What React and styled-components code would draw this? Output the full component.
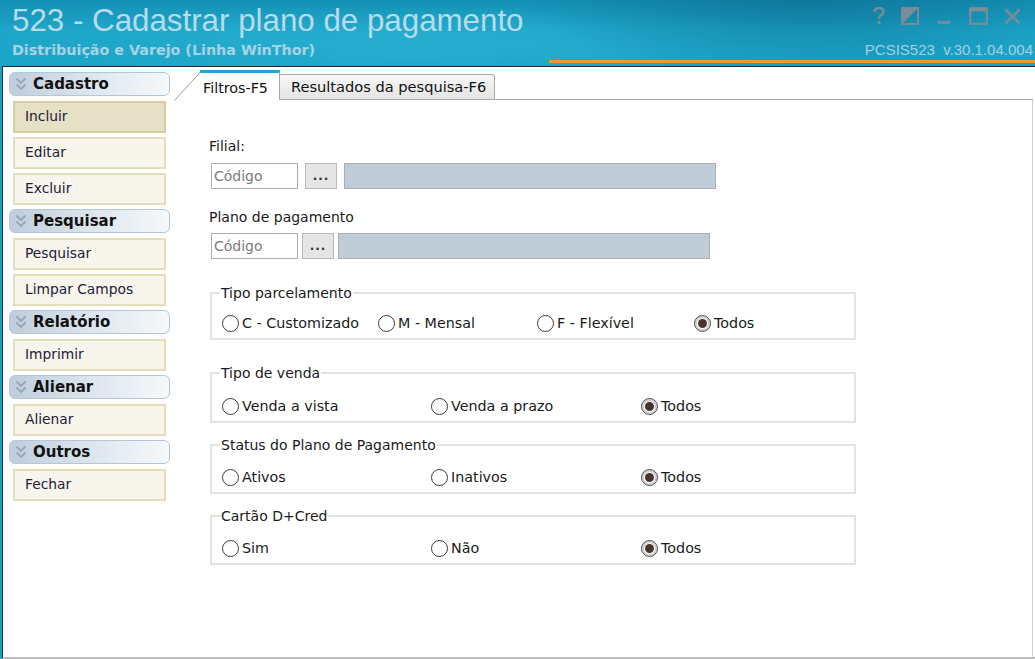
import React from 'react';
import styled, { createGlobalStyle } from 'styled-components';

const Global = createGlobalStyle`
  html, body { margin: 0; padding: 0; }
  body {
    width: 1035px; height: 659px; overflow: hidden;
    font-family: "DejaVu Sans", "Liberation Sans", sans-serif;
    color: #1a1a1a;
  }
  #root { height: 100%; }
`;

const Window = styled.div`
  width: 1035px; height: 659px;
  display: flex; flex-direction: column;
  background: #1aa0c2;
`;

const TitleBar = styled.header`
  height: 66px; flex: none; box-sizing: border-box;
  display: flex; flex-direction: column;
  background:
    radial-gradient(ellipse 420px 120px at 78% -10%, rgba(8, 96, 132, 0.55), rgba(8, 96, 132, 0) 70%),
    radial-gradient(ellipse 700px 60px at 40% 70%, rgba(60, 190, 220, 0.35), rgba(60, 190, 220, 0) 70%),
    linear-gradient(180deg, #1590b5 0%, #1ca5c8 45%, #1aa3c6 100%);
`;

const TitleRow = styled.div`
  height: 40px; display: flex; justify-content: space-between; align-items: flex-start;
`;

const Title = styled.h1`
  margin: 0; padding: 3px 0 0 12px;
  font: 400 31.3px/36px "Liberation Sans", Arial, sans-serif;
  color: #b6dcec; letter-spacing: 0;
`;

const WinButtons = styled.div`
  display: flex; align-items: center; gap: 0; margin: 7px 6px 0 0;
`;

const WinBtn = styled.span`
  width: ${p => p.w || 34}px; height: 18px;
  display: inline-flex; align-items: center; justify-content: center;
`;

const SubRow = styled.div`
  height: 20px; display: flex; justify-content: space-between; align-items: center;
`;

const Subtitle = styled.div`
  padding-left: 12px;
  font: 700 14.3px/20px "DejaVu Sans", sans-serif;
  color: #a6d3e5;
`;

const Version = styled.div`
  padding-right: 2px;
  font: 400 15px/20px "Liberation Sans", Arial, sans-serif;
  color: #a3d0e1; white-space: pre;
`;

const Accent = styled.div`
  height: 3px; margin: 0 0 0 549px; background: #f0982a;
`;

const Body = styled.div`
  flex: 1; display: flex; min-height: 0;
  margin: 0 0 0 2px;
  background: #ffffff;
  border-left: 1px solid #26343a;
  border-top: 1px solid #1f2a2e;
  border-bottom: 2px solid #bdbdbd;
`;

const Sidebar = styled.nav`
  width: 161px; flex: none;
  padding: 5px 0 0 6px;
  display: flex; flex-direction: column; gap: 4px;
`;

const SectionHeader = styled.div`
  height: 24px; box-sizing: border-box;
  margin-bottom: 1px;
  display: flex; align-items: center; gap: 6px;
  padding-left: 5px;
  border: 1px solid #b7c6d5; border-radius: 6px;
  background: linear-gradient(90deg, #bfcddc 0%, #d9e3ec 45%, #f6f9fb 100%);
  font: 700 15px/1 "DejaVu Sans", sans-serif; color: #111;
`;

const NavItem = styled.div`
  height: 32px; box-sizing: border-box;
  margin-left: 4px; width: 153px;
  display: flex; align-items: center; padding-left: 10px;
  border: 2px solid ${p => (p.active ? '#d8cc9e' : '#e6deba')};
  background: ${p => (p.active ? '#e6e0c7' : '#f7f5ec')};
  font: 400 13.8px/1 "DejaVu Sans", sans-serif; color: #1f2038;
`;

const Main = styled.main`
  flex: 1; display: flex; flex-direction: column;
  margin: 3px 2px 0 4px;
`;

const TabStrip = styled.div`
  height: 30px; display: flex; align-items: flex-end; flex: none;
`;

const TabLead = styled.div`
  width: 26px; height: 30px; flex: none;
`;

const ActiveTab = styled.div`
  position: relative;
  width: 80px; height: 30px; box-sizing: border-box;
  display: flex; align-items: center; padding: 3px 0 0 3px;
  border-top: 3px solid #2a9fd6;
  border-right: 1px solid #a8a8a8;
  background: #fff;
  font: 400 14.3px/1 "DejaVu Sans", sans-serif; color: #111;
`;

const TabSlant = styled.svg`
  position: absolute; left: -26px; top: -3px;
`;

const Tab = styled.div`
  height: 26px; box-sizing: border-box;
  display: flex; align-items: center; padding: 0 8px 0 11px;
  border: 1px solid #a9a9a9; border-left: none; border-radius: 0 3px 0 0;
  background: linear-gradient(180deg, #f7f7f7 0%, #e4e4e4 100%);
  font: 400 14.6px/1 "DejaVu Sans", sans-serif; color: #111;
`;

const TabFill = styled.div`
  flex: 1; height: 30px; box-sizing: border-box; border-bottom: 1px solid #a9a9a9;
`;

const Panel = styled.section`
  flex: 1; box-sizing: border-box;
  border-right: 1px solid #d2d2d2;
  padding: 37px 0 0 35px;
  display: flex; flex-direction: column; align-items: flex-start;
`;

const FieldLabel = styled.label`
  font: 400 14px/18px "DejaVu Sans", sans-serif; color: #1a1a1a;
  margin: ${p => p.top || 0}px 0 ${p => p.bottom || 7}px 0;
`;

const LookupRow = styled.div`
  display: flex; gap: ${p => p.gap}px; margin-left: 2px; height: 26px;
`;

const CodeInput = styled.div`
  width: 87px; height: 26px; box-sizing: border-box;
  border: 1px solid #adadad; background: #fff;
  display: flex; align-items: center; padding-left: 2px;
  font: 400 14px/1 "DejaVu Sans", sans-serif; color: #7b7b7b;
`;

const DotsButton = styled.div`
  width: 32px; height: 26px; box-sizing: border-box;
  border: 1px solid #b9b9b9; background: #e5e5e5;
  display: flex; align-items: flex-end; justify-content: center; padding-bottom: 6px;
  font: 700 12px/1 "DejaVu Sans", sans-serif; color: #333; letter-spacing: 1px;
`;

const DescField = styled.div`
  width: ${p => p.w}px; height: 26px; box-sizing: border-box;
  border: 1px solid #a9b0b6; background: #c0cdd9;
`;

const GroupBox = styled.fieldset`
  width: 646px; box-sizing: border-box;
  margin: ${p => p.top}px 0 0 1px; padding: 0 10px 6px;
  border: 2px solid #e2e2e2;
  min-inline-size: auto;
`;

const Legend = styled.legend`
  padding: 0 1px; margin-left: -2px;
  font: 400 14px/18px "DejaVu Sans", sans-serif; color: #1a1a1a;
`;

const RadioRow = styled.div`
  display: grid; grid-template-columns: ${p => p.cols};
  margin-top: ${p => p.top}px; height: 18px; align-items: center;
`;

const RadioOption = styled.div`
  display: flex; align-items: center; gap: 3px;
  font: 400 14.3px/18px "DejaVu Sans", sans-serif; color: #1a1a1a; white-space: nowrap;
`;

const RadioCircle = styled.span`
  width: 17px; height: 17px; box-sizing: border-box; flex: none;
  border-radius: 50%;
  border: 1px solid ${p => (p.checked ? '#4a4a4a' : '#3b3b3b')};
  background: #fff;
  box-shadow: ${p => (p.checked ? 'inset 0 0 0 2px #cfcfcf' : 'none')};
  display: inline-flex; align-items: center; justify-content: center;
`;

const RadioDot = styled.span`
  width: 9px; height: 9px; border-radius: 50%; background: #47342c;
`;

const Chevrons = () => (
  <svg width="12" height="14" viewBox="0 0 12 14">
    <path d="M1.5 1.5 L6 6 L10.5 1.5 M1.5 7.5 L6 12 L10.5 7.5" fill="none" stroke="#95a6b6" strokeWidth="1.8" />
  </svg>
);

const IconColor = '#7c8c97';

const HelpIcon = () => (
  <svg width="14" height="18" viewBox="0 0 14 18">
    <path d="M2.5 5 C2.5 2 4.5 1 7 1 C9.8 1 11.5 2.6 11.5 4.8 C11.5 7.2 9.6 7.8 8 9 C7.2 9.6 7 10.4 7 11.5" fill="none" stroke={IconColor} strokeWidth="2.4" />
    <rect x="5.6" y="14" width="2.8" height="3" fill={IconColor} />
  </svg>
);

const RestoreIcon = () => (
  <svg width="18" height="18" viewBox="0 0 18 18">
    <rect x="1" y="1" width="16" height="16" fill="none" stroke={IconColor} strokeWidth="2" />
    <path d="M1 1 H17 L1 17 Z" fill={IconColor} />
  </svg>
);

const MinIcon = () => (
  <svg width="14" height="18" viewBox="0 0 14 18">
    <rect x="1" y="14" width="12" height="3" fill={IconColor} />
  </svg>
);

const MaxIcon = () => (
  <svg width="19" height="18" viewBox="0 0 19 18">
    <rect x="1.2" y="1.2" width="16.6" height="15.6" fill="none" stroke={IconColor} strokeWidth="2.2" />
    <rect x="1" y="1" width="17" height="3.5" fill={IconColor} />
  </svg>
);

const CloseIcon = () => (
  <svg width="17" height="17" viewBox="0 0 17 17">
    <path d="M1.5 1.5 L15.5 15.5 M15.5 1.5 L1.5 15.5" stroke={IconColor} strokeWidth="2.6" />
  </svg>
);

const Radio = ({ label, checked }) => (
  <RadioOption>
    <RadioCircle checked={checked}>{checked && <RadioDot />}</RadioCircle>
    {label}
  </RadioOption>
);

const groups = [
  {
    title: 'Tipo parcelamento', top: 25, rowTop: 12,
    cols: '156px 159px 157px auto',
    options: ['C - Customizado', 'M - Mensal', 'F - Flexível', 'Todos'],
  },
  {
    title: 'Tipo de venda', top: 24, rowTop: 15,
    cols: '209px 210px auto',
    options: ['Venda a vista', 'Venda a prazo', 'Todos'],
  },
  {
    title: 'Status do Plano de Pagamento', top: 13, rowTop: 14,
    cols: '209px 210px auto',
    options: ['Ativos', 'Inativos', 'Todos'],
  },
  {
    title: 'Cartão D+Cred', top: 13, rowTop: 14,
    cols: '209px 210px auto',
    options: ['Sim', 'Não', 'Todos'],
  },
];

const menu = [
  { section: 'Cadastro', items: ['Incluir', 'Editar', 'Excluir'] },
  { section: 'Pesquisar', items: ['Pesquisar', 'Limpar Campos'] },
  { section: 'Relatório', items: ['Imprimir'] },
  { section: 'Alienar', items: ['Alienar'] },
  { section: 'Outros', items: ['Fechar'] },
];

export default function App() {
  return (
    <Window>
      <Global />
      <TitleBar>
        <TitleRow>
          <Title>523 - Cadastrar plano de pagamento</Title>
          <WinButtons>
            <WinBtn w={28}><HelpIcon /></WinBtn>
            <WinBtn w={34}><RestoreIcon /></WinBtn>
            <WinBtn w={34}><MinIcon /></WinBtn>
            <WinBtn w={34}><MaxIcon /></WinBtn>
            <WinBtn w={34}><CloseIcon /></WinBtn>
          </WinButtons>
        </TitleRow>
        <SubRow>
          <Subtitle>Distribuição e Varejo (Linha WinThor)</Subtitle>
          <Version>PCSIS523  v.30.1.04.004</Version>
        </SubRow>
        <Accent />
      </TitleBar>
      <Body>
        <Sidebar>
          {menu.map(m => (
            <React.Fragment key={m.section}>
              <SectionHeader><Chevrons />{m.section}</SectionHeader>
              {m.items.map(it => (
                <NavItem key={it} active={it === 'Incluir'}>{it}</NavItem>
              ))}
            </React.Fragment>
          ))}
        </Sidebar>
        <Main>
          <TabStrip>
            <TabLead />
            <ActiveTab>
              <TabSlant width="27" height="31" viewBox="0 0 27 31">
                <path d="M0.5 30.5 L26.5 2" stroke="#9a9a9a" strokeWidth="1" fill="none" />
              </TabSlant>
              Filtros-F5
            </ActiveTab>
            <Tab>Resultados da pesquisa-F6</Tab>
            <TabFill />
          </TabStrip>
          <Panel>
            <FieldLabel bottom={8}>Filial:</FieldLabel>
            <LookupRow gap={7}>
              <CodeInput>Código</CodeInput>
              <DotsButton>...</DotsButton>
              <DescField w={372} />
            </LookupRow>
            <FieldLabel top={19} bottom={7}>Plano de pagamento</FieldLabel>
            <LookupRow gap={4}>
              <CodeInput>Código</CodeInput>
              <DotsButton>...</DotsButton>
              <DescField w={372} />
            </LookupRow>
            {groups.map(g => (
              <GroupBox key={g.title} top={g.top}>
                <Legend>{g.title}</Legend>
                <RadioRow cols={g.cols} top={g.rowTop}>
                  {g.options.map(o => (
                    <Radio key={o} label={o} checked={o === 'Todos'} />
                  ))}
                </RadioRow>
              </GroupBox>
            ))}
          </Panel>
        </Main>
      </Body>
    </Window>
  );
}
